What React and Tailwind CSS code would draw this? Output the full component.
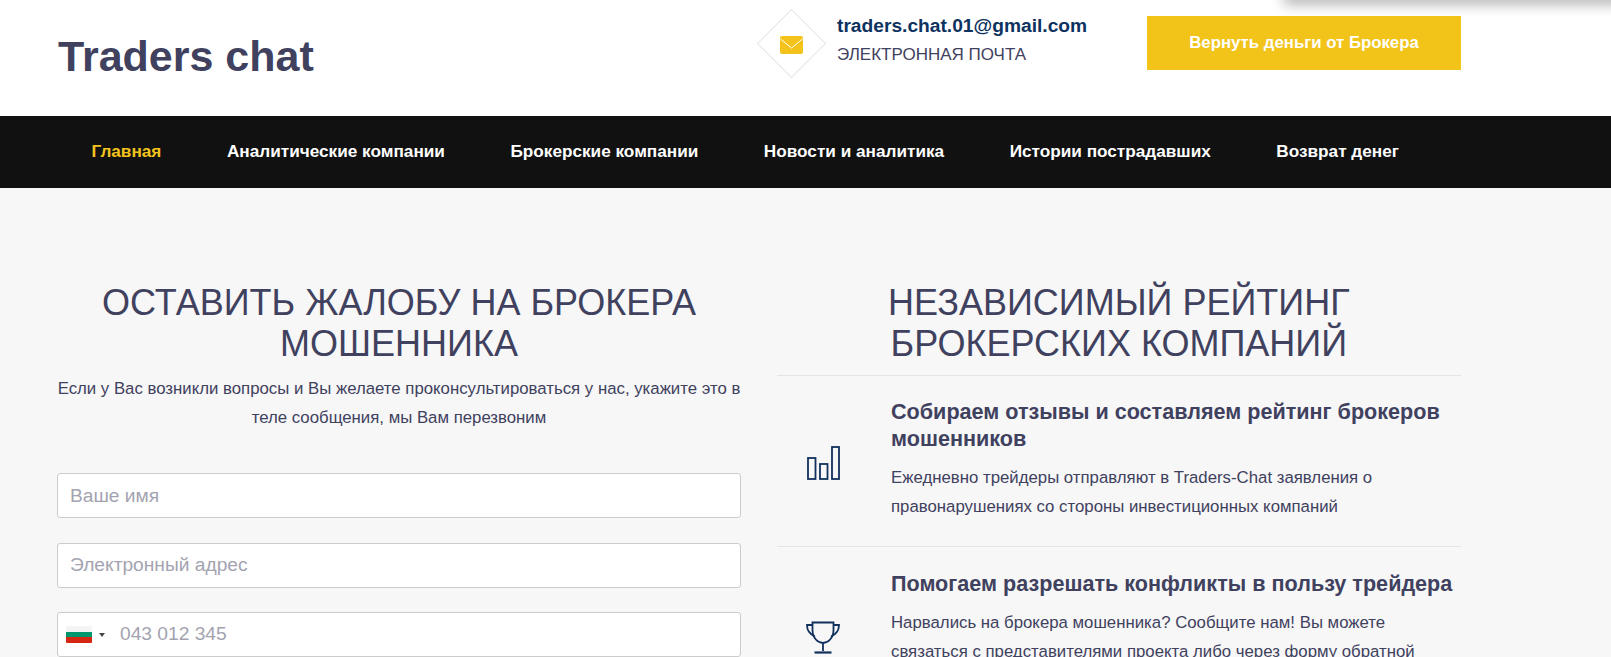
const navItems = [
  { label: "Главная", active: true },
  { label: "Аналитические компании" },
  { label: "Брокерские компании" },
  { label: "Новости и аналитика" },
  { label: "Истории пострадавших" },
  { label: "Возврат денег" },
]

function MailIcon() {
  return (
    <svg width="23" height="18" viewBox="0 0 23 18" className="block">
      <rect width="23" height="18" rx="2" fill="#f3c31c" />
      <path d="M0.5 3 L11.5 12 L22.5 3" fill="none" stroke="#ffffff" strokeWidth="1" />
    </svg>
  )
}

function BarsIcon() {
  return (
    <svg width="33" height="34" viewBox="0 0 33 34" fill="none" stroke="#12305c" strokeWidth="1.8" className="block">
      <rect x="1" y="12" width="7.5" height="21" />
      <rect x="13" y="18" width="7.5" height="15" />
      <rect x="25" y="1" width="7" height="32" />
    </svg>
  )
}

function CupIcon() {
  return (
    <svg width="34" height="33" viewBox="0 0 34 33" fill="none" stroke="#12305c" strokeWidth="1.8" className="block">
      <path d="M6.5 1.5 H27.5 V9 C27.5 17 22 22 17 22 C12 22 6.5 17 6.5 9 Z" />
      <path d="M6.5 4 H1 C1 9 3 13 9 15.5" />
      <path d="M27.5 4 H33 C33 9 31 13 25 15.5" />
      <path d="M17 22 V30" />
      <path d="M8.5 31.5 H25.5" strokeWidth="2.2" />
    </svg>
  )
}

function Field({ placeholder }) {
  return (
    <input
      placeholder={placeholder}
      className="block h-[45px] w-full rounded-[3px] border border-[#cccccc] bg-white px-3 text-[19.2px] text-[#40415e] placeholder:text-[#a3a3b0]"
    />
  )
}

export default function App() {
  return (
    <div className="relative h-[657px] overflow-hidden bg-[#f7f7f7] font-['Liberation_Sans',Arial,sans-serif] text-[#40415e]">
      <div className="absolute right-[-20px] top-[-10px] h-[10px] w-[347px] shadow-[0_3px_14px_rgba(0,0,0,0.4)]" />

      <header className="flex h-[116px] items-start bg-white pl-[57px] pr-[150px]">
        <div className="mt-[35px] w-[700px] pl-[1px] text-[43px] font-bold leading-none">Traders chat</div>
        <div className="mt-[9px] flex w-[390px] items-start">
          <div className="flex h-[68px] w-[68px] shrink-0 items-center justify-center">
            <div className="flex h-[49px] w-[49px] shrink-0 rotate-45 items-center justify-center border border-[#e6e6e6]">
              <div className="-rotate-45">
                <div className="mt-[3px]">
                  <MailIcon />
                </div>
              </div>
            </div>
          </div>
          <div className="ml-[12px] mt-[4px]">
            <div className="text-[19.2px] font-bold leading-[26px] text-[#0d3260]">traders.chat.01@gmail.com</div>
            <div className="mt-[3px] text-[17px] leading-[26px]">ЭЛЕКТРОННАЯ ПОЧТА</div>
          </div>
        </div>
        <button className="ml-auto mt-[16px] h-[54px] w-[314px] bg-[#f2c319] text-[16.8px] font-bold text-white">
          Вернуть деньги от Брокера
        </button>
      </header>

      <nav className="flex h-[72px] items-center gap-[65.5px] bg-[#111111] pl-[91.5px]">
        {navItems.map((item) => (
          <a
            key={item.label}
            className={item.active ? "text-[17.2px] font-bold text-[#f3c31c]" : "text-[17.2px] font-bold text-white"}
          >
            {item.label}
          </a>
        ))}
      </nav>

      <main className="grid grid-cols-[684px_684px] gap-[36px] pl-[57px] pt-[94px]">
        <section>
          <h2 className="text-center text-[36px] leading-[41px]">
            ОСТАВИТЬ ЖАЛОБУ НА БРОКЕРА
            <br />
            МОШЕННИКА
          </h2>
          <p className="mt-[10px] text-center text-[16.8px] leading-[29px]">
            Если у Вас возникли вопросы и Вы желаете проконсультироваться у нас, укажите это в теле сообщения, мы Вам перезвоним
          </p>
          <div className="mt-[41px] flex flex-col gap-[24.5px]">
            <Field placeholder="Ваше имя" />
            <Field placeholder="Электронный адрес" />
            <div className="flex h-[45px] items-center rounded-[3px] border border-[#cccccc] bg-white pl-[8px]">
              <div className="flex h-[17px] w-[26px] shrink-0 flex-col overflow-hidden rounded-[1px]">
                <div className="h-1/3 bg-[#f4f4f4]" />
                <div className="h-1/3 bg-[#00966e]" />
                <div className="h-1/3 bg-[#d62612]" />
              </div>
              <div className="ml-[7px] h-0 w-0 shrink-0 border-x-[3px] border-t-[4px] border-x-transparent border-t-[#444444]" />
              <input placeholder="043 012 345" className="ml-[15px] min-w-0 flex-1 text-[19.2px] outline-none placeholder:text-[#a3a3b0]" />
            </div>
          </div>
        </section>

        <section>
          <h2 className="ml-[111px] w-fit text-center text-[36px] leading-[41px]">
            НЕЗАВИСИМЫЙ РЕЙТИНГ
            <br />
            БРОКЕРСКИХ КОМПАНИЙ
          </h2>
          <div className="mt-[11px] flex h-[171px] items-center border-t border-[#e4e4e4]">
            <div className="flex w-[114px] shrink-0 justify-center pr-[22px] pt-[3px]"><BarsIcon /></div>
            <div className="pb-[3px]">
              <h3 className="text-[21.6px] font-bold leading-[27.3px]">Собираем отзывы и составляем рейтинг брокеров мошенников</h3>
              <p className="mt-[11px] text-[16.8px] leading-[29px]">
                Ежедневно трейдеры отправляют в Traders-Chat заявления о правонарушениях со стороны инвестиционных компаний
              </p>
            </div>
          </div>
          <div className="flex border-t border-[#e4e4e4] pt-[23px]">
            <div className="flex w-[114px] shrink-0 justify-center pr-[22px] pt-[51px]"><CupIcon /></div>
            <div>
              <h3 className="text-[21.6px] font-bold leading-[27.3px]">Помогаем разрешать конфликты в пользу трейдера</h3>
              <p className="mt-[11px] text-[16.8px] leading-[29px]">
                Нарвались на брокера мошенника? Сообщите нам! Вы можете связаться с представителями проекта либо через форму обратной
              </p>
            </div>
          </div>
        </section>
      </main>
    </div>
  )
}
